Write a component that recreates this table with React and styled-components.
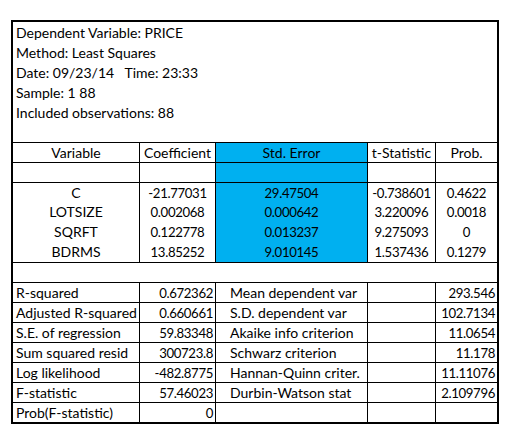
import React from "react";
import styled, { createGlobalStyle } from "styled-components";

const GlobalStyle = createGlobalStyle`
  html, body {
    margin: 0;
    padding: 0;
    background: #ffffff;
  }
  body {
    font-family: Lato, "Liberation Sans", sans-serif;
    color: #000000;
  }
`;

const Page = styled.div`
  padding: 20px 0 0 11px;
`;

const Sheet = styled.div`
  width: 484px;
  border: 2px solid #000;
  font-size: 14px;
`;

const InfoLine = styled.div`
  height: 20px;
  line-height: 21px;
  padding-left: 3px;
  white-space: pre;
`;

const Row = styled.div`
  display: grid;
  grid-template-columns: 127px 76px 152px 68px 61px;
  height: 20px;
  box-sizing: border-box;
  border-top: ${(p) => (p.$line ? "1px solid #000" : "none")};
`;

const Cell = styled.div`
  box-sizing: border-box;
  line-height: 20px;
  white-space: nowrap;
  overflow: hidden;
  border-right: ${(p) => (p.$last ? "none" : "1px solid #000")};
  background: ${(p) => (p.$blue ? "#00b0f0" : "transparent")};
  text-align: ${(p) => p.$align || "center"};
  padding: ${(p) =>
    p.$align === "right" ? "0 2px 0 0" : p.$indent ? "0 0 0 14px" : p.$align === "left" ? "0 0 0 3px" : "0"};
  font-size: ${(p) => (p.$num ? "13.2px" : "14px")};
  letter-spacing: ${(p) => (p.$num ? "-0.35px" : "normal")};
`;

const GapRow = styled.div`
  height: 20px;
  box-sizing: border-box;
  border-top: 1px solid #000;
`;

const info = [
  "Dependent Variable: PRICE",
  "Method: Least Squares",
  "Date: 09/23/14   Time: 23:33",
  "Sample: 1 88",
  "Included observations: 88",
  "",
];

const coefs = [
  ["C", "-21.77031", "29.47504", "-0.738601", "0.4622"],
  ["LOTSIZE", "0.002068", "0.000642", "3.220096", "0.0018"],
  ["SQRFT", "0.122778", "0.013237", "9.275093", "0"],
  ["BDRMS", "13.85252", "9.010145", "1.537436", "0.1279"],
];

const stats = [
  ["R-squared", "0.672362", "Mean dependent var", "293.546"],
  ["Adjusted R-squared", "0.660661", "S.D. dependent var", "102.7134"],
  ["S.E. of regression", "59.83348", "Akaike info criterion", "11.0654"],
  ["Sum squared resid", "300723.8", "Schwarz criterion", "11.178"],
  ["Log likelihood", "-482.8775", "Hannan-Quinn criter.", "11.11076"],
  ["F-statistic", "57.46023", "Durbin-Watson stat", "2.109796"],
  ["Prob(F-statistic)", "0", "", ""],
];

const CoefRow = ({ cells, line, num }) => (
  <Row $line={line}>
    {cells.map((c, i) => (
      <Cell key={i} $blue={i === 2} $last={i === 4} $num={num && i > 0}>
        {c}
      </Cell>
    ))}
  </Row>
);

const StatRow = ({ s }) => (
  <Row $line>
    <Cell $align="left">{s[0]}</Cell>
    <Cell $align="right" $num>
      {s[1]}
    </Cell>
    <Cell $align="left" $indent>
      {s[2]}
    </Cell>
    <Cell />
    <Cell $align="right" $last $num>
      {s[3]}
    </Cell>
  </Row>
);

export default function App() {
  return (
    <Page>
      <GlobalStyle />
      <Sheet>
        {info.map((t, i) => (
          <InfoLine key={i}>{t}</InfoLine>
        ))}
        <CoefRow line cells={["Variable", "Coefficient", "Std. Error", "t-Statistic", "Prob."]} />
        <CoefRow line cells={["", "", "", "", ""]} />
        {coefs.map((r, i) => (
          <CoefRow key={i} line={i === 0} num cells={r} />
        ))}
        <GapRow />
        {stats.map((s, i) => (
          <StatRow key={i} s={s} />
        ))}
      </Sheet>
    </Page>
  );
}
